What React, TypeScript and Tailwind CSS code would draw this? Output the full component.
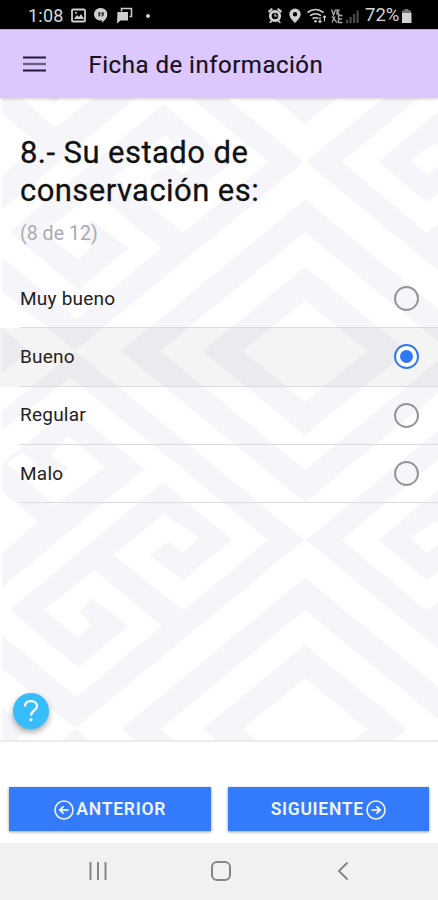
import React from "react";

const options = ["Muy bueno", "Bueno", "Regular", "Malo"];
const selected = "Bueno";

const GREY = "#f5f5fa";

/* Concentric rhombus rings around a centre point */
function Rings({ cx, cy }: { cx: number; cy: number }) {
  const rhombus = (k: number) => {
    const w = 690 * k;
    const h = 567 * k;
    return `M${cx} ${cy - h}L${cx + w} ${cy}L${cx} ${cy + h}L${cx - w} ${cy}Z`;
  };
  return (
    <path
      fill={GREY}
      fillRule="evenodd"
      d={rhombus(0.8) + rhombus(0.63) + rhombus(0.445) + rhombus(0.27)}
    />
  );
}

/* Rhombus filled with the stepped fret */
function Fret() {
  return (
    <g>
      <path d="M225 33L912 600L225 1165L-465 600Z" fill={GREY} />
      <g fill="#fff">
        <path d="M490 338L805 600L550 812L340 645L495 518L520 545L545 555L598 595L550 638L505 605L450 645L550 720L695 600L490 427L30 810L235 983L385 858L275 775L240 815L275 855L235 892L130 810L285 690L485 858L230 1072L-80 815Z" />
        <path d="M210 112L500 348L430 385L210 205L-80 440L-160 400Z" />
        <path d="M205 287L315 380L165 497L20 370L70 335L160 425L205 385L150 345Z" />
        <path d="M115 545L0 645L-120 600L0 450Z" />
      </g>
    </g>
  );
}

function Backdrop() {
  return (
    <svg
      className="absolute inset-0 h-full w-full"
      viewBox="0 98 438 642"
      preserveAspectRatio="none"
      aria-hidden
    >
      <g transform="translate(0 340) scale(0.33333)">
        {[-1134, 0, 1134].map((dy) => (
          <g key={dy} transform={`translate(0 ${dy})`}>
            <Fret />
            <g transform="translate(1830 0) scale(-1 1)">
              <Fret />
            </g>
            <Rings cx={915} cy={33} />
            <Rings cx={-465} cy={33} />
          </g>
        ))}
      </g>
      <rect x="0" y="98" width="2" height="642" fill="#fff" />
    </svg>
  );
}

function StatusBar() {
  return (
    <div className="flex h-[29px] shrink-0 items-center bg-black pt-[2px] pr-[26px] pl-[28px] text-[18px] text-[#d6d6d6]">
      <span className="w-[43px] tracking-[0.2px]">1:08</span>
      <svg width="84" height="20" viewBox="0 0 84 20" fill="#cfcfcf">
        <rect x="1" y="3.5" width="13" height="12" rx="1" fill="none" stroke="#cfcfcf" strokeWidth="1.8" />
        <path d="M3 13l3-4 2 2 2-3 3 5z" />
        <circle cx="5" cy="6.7" r="1" />
        <path d="M30 2a6.3 6.3 0 0 1 6.3 6.3c0 3.800-2.800 6.400-5.300 8.400v-2.400A6.300 6.300 0 1 1 30 2z" />
        <path d="M27.300 6.300h2.200v3l-1.200 1.300h-1v-1.300h.6v-.7h-.6zM30.600 6.300h2.200v3l-1.200 1.300h-1v-1.300h.6v-.7h-.6z" fill="#333" />
        <path d="M50.500 5.500V2.500H60.500V10.500H58.500" fill="none" stroke="#cfcfcf" strokeWidth="1.500" />
        <path d="M46.500 6H57v8.500H49.500l-3.500 3z" />
        <circle cx="77" cy="10" r="2" />
      </svg>
      <svg className="ml-auto shrink-0" width="99" height="20" viewBox="0 0 99 20" fill="#cfcfcf">
        <circle cx="9" cy="10" r="4.700" fill="none" stroke="#d2d2d2" strokeWidth="2.800" />
        <path d="M2 5l3.500-3L7 3.500 3 7zM16 5l-3.500-3L11 3.500 15 7zM3 17l2-3 1.500 1.500L4.500 17zM15 17l-2-3-1.500 1.500 2 1.500z" />
        <path d="M9 7.500V10h2.500" fill="none" stroke="#cfcfcf" strokeWidth="1.200" />
        <path fillRule="evenodd" d="M29 2.500a5.700 5.700 0 0 1 5.700 5.700C34.700 12 29 17 29 17s-5.700-5-5.700-8.800A5.700 5.700 0 0 1 29 2.500zm0 3.500a2.200 2.200 0 1 0 0 4.400A2.200 2.200 0 0 0 29 6z" />
        <g fill="none" stroke="#cfcfcf" strokeWidth="1.600">
          <path d="M41.500 6.500q8-6 16 0M44 9.700q5.500-4 11 0M46.500 12.700q3-2 6 0" />
          <path d="M54 11v5.500M52.500 15l1.500 1.500 1.500-1.500M58.500 15.500V10M57 11.500l1.500-1.500 1.500 1.500" strokeWidth="1.100" />
        </g>
        <circle cx="49.500" cy="15.200" r="1.300" />
        <g fill="none" stroke="#a8a8a8" strokeWidth="1.300">
          <path d="M65.500 3.500L67.500 9l2-5.500M71 3v6M73.500 3.500L71.500 6l2 3M66 10.500l5 6M66 16.500l3-6M76.500 9.500h-4v7h4M72.500 13h3.500" />
        </g>
        <g fill="#4a4a4a">
          <path d="M80 14h2.200v3H80zM83.500 11h2.200v6h-2.200zM87 8h2.200v9H87zM90.500 4.500h2.200V17h-2.200z" />
        </g>
      </svg>
      <span className="w-[36px] shrink-0 text-[18.500px]">72%</span>
      <svg className="shrink-0" width="11" height="20" viewBox="0 0 11 20">
        <path d="M3.500 3h4v1.500H10V8H1V4.500h2.500z" fill="#777" />
        <path d="M1 7h9.500v10H1z" fill="#d2d2d2" />
      </svg>
    </div>
  );
}

function Header() {
  return (
    <header className="relative z-10 flex h-[69px] shrink-0 items-center border-t border-[#b9a9d3] bg-[#dcc8ff] pl-[23px] shadow-[0_1px_3px_rgba(0,0,0,0.18)]">
      <svg width="23" height="16" viewBox="0 0 23 16" className="-mt-px">
        <path d="M0 1.500h23M0 14.500h23" stroke="#251b38" strokeWidth="2" />
        <path d="M0 8h23" stroke="#6d6084" strokeWidth="2.400" />
      </svg>
      <h1 className="mt-[2px] ml-[42.500px] text-[24px] font-normal tracking-[0.500px] text-[#171020] [-webkit-text-stroke:0.2px_#171020]">
        Ficha de información
      </h1>
    </header>
  );
}

function Radio({ on }: { on: boolean }) {
  return (
    <span
      className={
        "flex size-[25px] items-center justify-center rounded-full border-2 " +
        (on ? "border-[#2f78f5] bg-white" : "border-[#969696]")
      }
    >
      {on && <span className="size-[13px] rounded-full bg-[#2f78f5]" />}
    </span>
  );
}

function ArrowCircle({ flip }: { flip?: boolean }) {
  return (
    <svg
      width="20"
      height="20"
      viewBox="0 0 20 20"
      fill="none"
      stroke="#eef4ff"
      strokeWidth="1.600"
      className={flip ? "rotate-180" : ""}
    >
      <circle cx="10" cy="10" r="9" />
      <path d="M5.500 10h9" strokeWidth="1.800" />
      <path d="M9.500 6.300L5.800 10l3.700 3.700" strokeWidth="1.800" />
    </svg>
  );
}

export default function App() {
  return (
    <div className="flex h-[900px] w-[438px] flex-col overflow-hidden bg-white font-[Roboto,sans-serif]">
      <StatusBar />
      <Header />
      <main className="relative h-[642px] shrink-0">
        <Backdrop />
        <div className="relative">
          <div className="h-[172px] pt-[36px] pl-[20px]">
            <h2 className="text-[31px] leading-[38px] font-normal tracking-[0.440px] text-[#111] [-webkit-text-stroke:0.3px_#111]">
              8.- Su estado de
              <br />
              conservación es:
            </h2>
            <p className="mt-[13px] text-[19.500px] leading-[22px] tracking-[0.050px] text-[#aaabb0]">(8 de 12)</p>
          </div>
          <ul>
            {options.map((o) => (
              <li
                key={o}
                className={"h-[58.300px] pl-[20px] " + (o === selected ? "bg-black/[0.045]" : "")}
              >
                <div className="flex h-full items-center justify-between border-b-[1.500px] border-[#dcdce0] pr-[19px]">
                  <span className="mt-px text-[19px] tracking-[0.230px] text-[#222]">{o}</span>
                  <Radio on={o === selected} />
                </div>
              </li>
            ))}
          </ul>
        </div>
        <button className="absolute bottom-[11px] left-[13px] flex size-[36px] items-center justify-center rounded-full bg-[#38bdfc] shadow-[0_3px_6px_rgba(0,0,0,0.35)]">
          <svg width="16" height="24" viewBox="0 0 16 24" fill="none" stroke="#fff" strokeWidth="2.200">
            <path d="M2 7.500C2 4 4.500 2.200 8 2.200s6 2 6 5c0 4.300-6 4.300-6 9.300" />
            <circle cx="8" cy="20.700" r="1.100" fill="#fff" strokeWidth="1" />
          </svg>
        </button>
      </main>
      <footer className="flex h-[103px] shrink-0 items-start gap-[17px] border-t-2 border-[#ececef] bg-white px-[9px] pt-[45px] text-[17.500px] font-semibold text-[#eef4ff]">
        <button className="flex h-[44px] w-[202px] items-center justify-center bg-[#347bfc] pt-px pl-px shadow-[0_1px_3px_rgba(0,0,0,0.4)]">
          <ArrowCircle />
          <span className="ml-[2px] tracking-[0.750px]">ANTERIOR</span>
        </button>
        <button className="flex h-[44px] w-[202px] items-center justify-center bg-[#347bfc] pt-px shadow-[0_1px_3px_rgba(0,0,0,0.4)]">
          <span className="mr-[2px] tracking-[0.700px]">SIGUIENTE</span>
          <ArrowCircle flip />
        </button>
      </footer>
      <nav className="flex h-[57px] shrink-0 items-center bg-[#f1f1f1] pl-[87px]">
        <svg width="20" height="20" viewBox="0 0 20 20" stroke="#858585" strokeWidth="2" className="-mt-[2px]">
          <path d="M3.500 1v18M11 1v18M18.500 1v18" />
        </svg>
        <svg width="22" height="20" viewBox="0 0 22 20" fill="none" stroke="#858585" strokeWidth="2" className="-mt-[2px] ml-[103px]">
          <rect x="2" y="1" width="18" height="18" rx="5" />
        </svg>
        <svg width="12" height="20" viewBox="0 0 12 20" fill="none" stroke="#858585" strokeWidth="2" className="-mt-[2px] ml-[105px]">
          <path d="M10.500 1.500L2 10l8.500 8.500" />
        </svg>
      </nav>
    </div>
  );
}
